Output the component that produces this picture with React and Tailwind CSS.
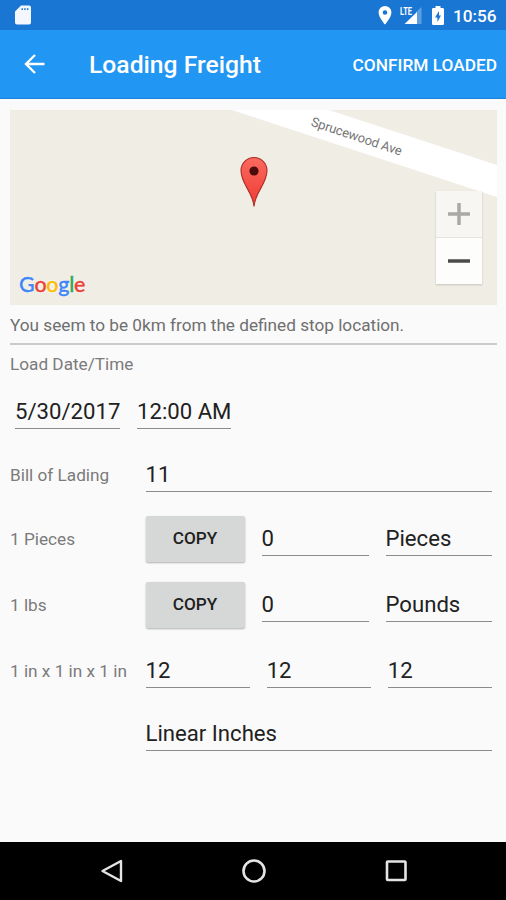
function StatusBar() {
  return (
    <div className="flex h-[30px] shrink-0 items-center bg-[#1976d2] pl-[15px] pr-[9px] text-white">
      <svg width="16" height="20" viewBox="0 0 16 20" fill="#f5f7ff">
        <path fillRule="evenodd" d="M6 .5h8a2 2 0 0 1 2 2v15a2 2 0 0 1-2 2H2a2 2 0 0 1-2-2V6.500zM6.500 3.300v1.700H8V3.300zm2.700 0v1.700h1.500V3.300zm2.700 0v1.700h1.500V3.300z" />
      </svg>
      <div className="ml-auto flex items-center">
        <svg className="mr-[8px]" width="14" height="19" viewBox="0 0 14 19" fill="#fff">
          <path fillRule="evenodd" d="M7 0a6.400 6.400 0 0 1 6.400 6.400C13.400 11.200 7 18.500 7 18.500S.6 11.200.6 6.400A6.400 6.400 0 0 1 7 0zm0 4.200a2.300 2.300 0 1 0 0 4.600 2.300 2.300 0 0 0 0-4.600z" />
        </svg>
        <svg className="mr-[10px]" width="22" height="19" viewBox="0 0 22 19">
          <path d="M16 6 21.500 1v17H16z" fill="#5c9fe0" />
          <path d="M4.500 18 17 6v12z" fill="#fff" />
          <text x="0" y="8.500" fontSize="10.500" fontWeight="700" fontFamily="Roboto, sans-serif" fill="#fff" textLength="12" lengthAdjust="spacingAndGlyphs">LTE</text>
        </svg>
        <svg className="mr-[9px]" width="12" height="19" viewBox="0 0 12 19">
          <path fill="#fff" d="M3.500 0h5v2H10.700q1.300 0 1.300 1.300V17.700Q12 19 10.700 19H1.300Q0 19 0 17.700V3.300Q0 2 1.300 2H3.500z" />
          <path fill="#1976d2" d="M7 5 3 11.500h2.400V16L9 9.600H7z" />
        </svg>
        <span className="w-[44px] whitespace-nowrap pt-[2px] text-[17.200px] font-medium leading-[28px]">10:56</span>
      </div>
    </div>
  );
}

function AppBar() {
  return (
    <header className="flex h-[69px] shrink-0 items-center border-b border-[#1c82dc] bg-[#2196f3] pl-[24px] pr-[9px] text-white">
      <svg width="21" height="20" viewBox="0 0 21 20" fill="none" stroke="#fff" strokeWidth="2.400">
        <path d="M20.500 10H2M11 1 2 10l9 9" />
      </svg>
      <h1 className="ml-[44px] pt-[3px] text-[24.700px] font-medium leading-none">Loading Freight</h1>
      <button className="ml-auto pt-[3px] text-[17.300px] font-medium leading-none">CONFIRM LOADED</button>
    </header>
  );
}

function Map() {
  return (
    <div className="relative h-[195px] overflow-hidden bg-[#f0ede5]">
      <svg className="absolute inset-0" width="487" height="196" viewBox="0 0 487 196">
        <path d="M222 0H319L487 55V87Z" fill="#fff" />
        <text x="300" y="15.500" transform="rotate(18.500 300 16)" fontSize="13" fontFamily="Roboto, sans-serif" fill="#757575" textLength="95">Sprucewood Ave</text>
        <defs>
          <linearGradient id="pin" x1="0" y1="0" x2="0" y2="1">
            <stop offset="0" stopColor="#fb6a5f" />
            <stop offset="1" stopColor="#ee3b33" />
          </linearGradient>
        </defs>
        <path d="M244 96.500C243 82 231 74 231 60.500a13 13 0 0 1 26 0C257 74 245 82 244 96.500z" fill="url(#pin)" stroke="#ad2c27" strokeWidth="1.100" />
        <circle cx="244" cy="61" r="4.600" fill="#4a0d0c" />
      </svg>
      <div className="absolute bottom-[7px] left-[9px] flex font-['Lato'] text-[21.500px] font-medium leading-[28px] tracking-[-0.3px] [text-shadow:0_0_2px_#fff,0_0_2px_#fff]">
        <span className="text-[#4285f4] [-webkit-text-stroke:0.4px_#4285f4]">G</span>
        <span className="text-[#ea4335] [-webkit-text-stroke:0.4px_#ea4335]">o</span>
        <span className="text-[#fbbc05] [-webkit-text-stroke:0.4px_#fbbc05]">o</span>
        <span className="text-[#4285f4] [-webkit-text-stroke:0.4px_#4285f4]">g</span>
        <span className="text-[#34a853] [-webkit-text-stroke:0.4px_#34a853]">l</span>
        <span className="text-[#ea4335] [-webkit-text-stroke:0.4px_#ea4335]">e</span>
      </div>
      <div className="absolute right-[15px] top-[81px] flex w-[46px] flex-col shadow-[0_1px_2px_rgba(0,0,0,0.18)]">
        <div className="flex h-[46px] items-center justify-center bg-[#f8f6f2]">
          <svg width="22" height="22" viewBox="0 0 22 22" stroke="#aaa9a6" strokeWidth="3.500"><path d="M0 11h22M11 0v22" /></svg>
        </div>
        <div className="flex h-[47px] items-center justify-center border-t border-[#e5e3de] bg-[#fdfdfb]">
          <svg width="22" height="22" viewBox="0 0 22 22" stroke="#4b4b4a" strokeWidth="3.500"><path d="M0 11h22" /></svg>
        </div>
      </div>
    </div>
  );
}

function Field({ value, className = "" }) {
  return (
    <div className={"h-[34px] whitespace-nowrap border-b border-[#8c8c8c] text-[22.150px] leading-[33px] text-[#212121] " + className}>
      {value}
    </div>
  );
}

function Row({ label, className, children }) {
  return (
    <div className={"flex items-center pr-[5px] " + className}>
      <div className="w-[135.500px] shrink-0 text-[17.200px] leading-[34px] text-[#7b7b7b]">{label}</div>
      {children}
    </div>
  );
}

function CopyButton() {
  return (
    <button className="mr-[17px] h-[46px] w-[99px] shrink-0 rounded-[2px] bg-[#d6d8d7] text-[17.200px] font-medium text-[#212121] shadow-[0_1px_2px_rgba(0,0,0,0.3)]">
      COPY
    </button>
  );
}

function NavBar() {
  return (
    <nav className="flex h-[58px] shrink-0 items-center justify-center gap-[116px] bg-black pl-[2px]">
      <svg width="26" height="26" viewBox="0 0 26 26" fill="none" stroke="#e4e4e4" strokeWidth="2.400">
        <path d="M22 3v20L3.500 13z" strokeLinejoin="round" />
      </svg>
      <svg width="26" height="26" viewBox="0 0 26 26" fill="none" stroke="#e4e4e4" strokeWidth="2.600">
        <circle cx="13" cy="13" r="10.500" />
      </svg>
      <svg width="26" height="26" viewBox="0 0 26 26" fill="none" stroke="#e4e4e4" strokeWidth="2.600">
        <rect x="4" y="3.500" width="18.500" height="18.500" rx=".8" />
      </svg>
    </nav>
  );
}

export default function App() {
  return (
    <div className="flex h-[900px] w-[506px] flex-col overflow-hidden bg-[#fafafa] font-['Roboto',sans-serif]">
      <StatusBar />
      <AppBar />
      <main className="flex flex-1 flex-col pl-[10px] pr-[9px] pt-[11px]">
        <Map />
        <p className="h-[40px] border-b-2 border-[#cacaca] text-[17.200px] leading-[40px] text-[#6f6f6f]">
          You seem to be 0km from the defined stop location.
        </p>
        <p className="text-[17.200px] leading-[38px] text-[#7b7b7b]">Load Date/Time</p>
        <div className="mt-[12px] flex gap-[17px] pl-[5px]">
          <Field value="5/30/2017" className="w-[105px]" />
          <Field value="12:00 AM" className="w-[94px]" />
        </div>
        <div className="flex flex-col">
          <Row label="Bill of Lading" className="mt-[29px]">
            <Field value="11" className="flex-1" />
          </Row>
          <Row label="1 Pieces" className="mt-[24px]">
            <CopyButton />
            <Field value="0" className="mr-[17px] w-[107px]" />
            <Field value="Pieces" className="flex-1" />
          </Row>
          <Row label="1 lbs" className="mt-[20px]">
            <CopyButton />
            <Field value="0" className="mr-[17px] w-[107px]" />
            <Field value="Pounds" className="flex-1" />
          </Row>
          <Row label="1 in x 1 in x 1 in" className="mt-[26px]">
            <div className="grid flex-1 grid-cols-3 gap-[17px]">
              <Field value="12" />
              <Field value="12" />
              <Field value="12" />
            </div>
          </Row>
          <Row label="" className="mt-[29px]">
            <Field value="Linear Inches" className="flex-1" />
          </Row>
        </div>
      </main>
      <NavBar />
    </div>
  );
}
